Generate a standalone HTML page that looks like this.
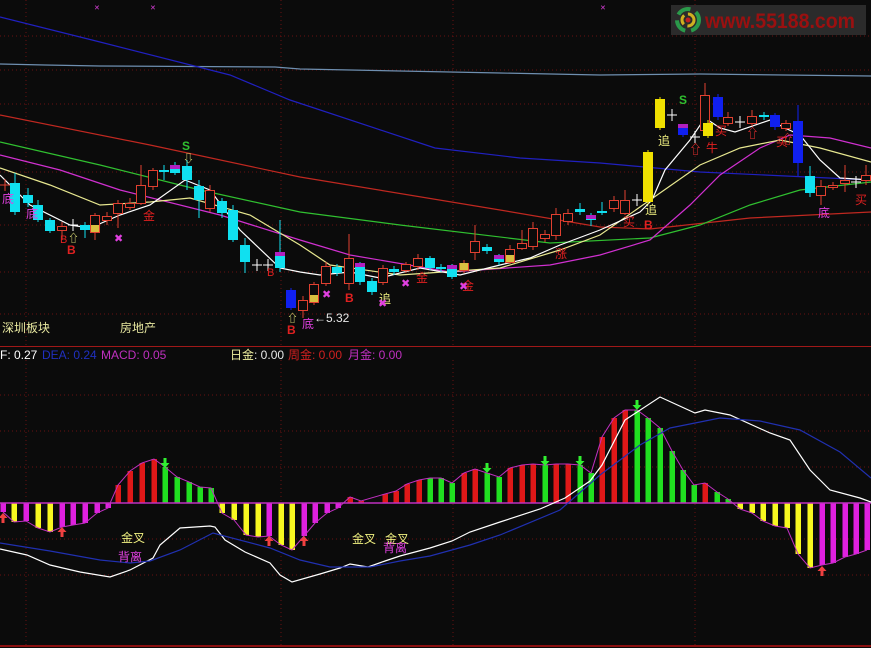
<!DOCTYPE html>
<html><head><meta charset="utf-8"><style>
html,body{margin:0;padding:0;background:#0b0b0b;width:871px;height:648px;overflow:hidden}
svg{display:block}
text{font-family:"Liberation Sans","Noto Sans CJK SC",sans-serif}
</style></head><body>
<svg id="s" width="871" height="648" viewBox="0 0 871 648" xmlns="http://www.w3.org/2000/svg">
<rect width="871" height="648" fill="#0b0b0b"/>
<g stroke="#6a1010" stroke-dasharray="1,3" stroke-width="1">
<line x1="0" y1="36" x2="871" y2="36"/><line x1="0" y1="70" x2="871" y2="70"/><line x1="0" y1="104" x2="871" y2="104"/>
<line x1="0" y1="172" x2="871" y2="172"/><line x1="0" y1="225" x2="871" y2="225"/><line x1="0" y1="272" x2="871" y2="272"/><line x1="0" y1="314" x2="871" y2="314"/>
<line x1="0" y1="395" x2="871" y2="395"/><line x1="0" y1="431" x2="871" y2="431"/><line x1="0" y1="467" x2="871" y2="467"/><line x1="0" y1="539" x2="871" y2="539"/><line x1="0" y1="575" x2="871" y2="575"/>
<line x1="26" y1="0" x2="26" y2="346"/><line x1="281" y1="0" x2="281" y2="346"/><line x1="453" y1="0" x2="453" y2="346"/><line x1="695" y1="0" x2="695" y2="346"/>
<line x1="26" y1="360" x2="26" y2="645"/><line x1="281" y1="360" x2="281" y2="645"/><line x1="453" y1="360" x2="453" y2="645"/><line x1="695" y1="360" x2="695" y2="645"/>
</g>
<line x1="0" y1="346.5" x2="871" y2="346.5" stroke="#a01818"/>
<line x1="0" y1="646" x2="871" y2="646" stroke="#8a1010" stroke-width="2"/>
<!-- logo -->
<rect x="671" y="5" width="195" height="30" fill="#2b2b2b"/>
<circle cx="688" cy="20" r="11" fill="none" stroke="#2a9a4a" stroke-width="4" stroke-dasharray="14 6"/>
<circle cx="688" cy="20" r="6" fill="none" stroke="#d0b020" stroke-width="3" stroke-dasharray="10 4"/>
<circle cx="688" cy="20" r="2.5" fill="#c02020"/>
<text x="705" y="28" font-size="21" font-weight="bold" fill="#9a1010" textLength="150" lengthAdjust="spacingAndGlyphs">www.55188.com</text>
<!-- MAs -->
<g fill="none" stroke-width="1.2">
<polyline stroke="#6f8fb0" points="0,64 45,65 100,66 275,67 300,69 400,71 500,73 600,75 700,74 871,76"/>
<polyline stroke="#2020c0" points="0,17 100,42 230,75 290,100 435,148 520,158 600,163 700,172 871,180"/>
<polyline stroke="#c02820" points="0,115 150,145 300,177 500,210 600,227 650,229 750,218 871,212"/>
<polyline stroke="#30c030" points="0,142 100,165 200,190 300,212 400,225 550,243 650,238 700,225 750,205 800,190 871,182"/>
<polyline stroke="#d030d0" points="0,155 60,170 120,190 220,215 300,240 350,255 450,272 550,265 600,255 650,240 690,205 720,175 760,148 790,135 830,138 871,148"/>
<polyline stroke="#e8e890" points="0,168 50,185 100,205 150,202 190,198 250,215 300,245 330,265 400,275 500,268 560,250 600,235 650,200 700,165 740,148 780,140 820,148 871,162"/>
<polyline stroke="#ffffff" points="0,175 30,205 70,225 90,228 120,215 150,205 185,180 210,190 240,230 280,268 300,272 320,275 350,272 380,278 420,268 460,275 500,265 530,258 560,245 600,230 640,212 652,200 665,170 690,140 705,118 720,128 735,132 770,120 785,128 800,135 820,160 840,178 871,180"/>
</g>
<g id="candles"></g>
<g id="macd"></g>
<!-- labels top -->
<g font-size="12">
<text x="2" y="203" fill="#e040e0">底</text><text x="26" y="218" fill="#e040e0">底</text>
<text x="302" y="328" fill="#e040e0">底</text><text x="818" y="217" fill="#e040e0">底</text>
<text x="143" y="220" fill="#e02020">金</text><text x="416" y="282" fill="#e02020">金</text><text x="462" y="290" fill="#e02020">金</text>
<text x="555" y="258" fill="#e02020">涨</text>
<text x="379" y="303" fill="#f0f080">追</text><text x="658" y="145" fill="#f0f080">追</text><text x="645" y="214" fill="#f0f080">追</text>
<text x="623" y="226" fill="#e02020">买</text><text x="715" y="135" fill="#e02020">买</text><text x="776" y="146" fill="#e02020">买</text><text x="855" y="204" fill="#e02020">买</text>
<text x="706" y="152" fill="#e02020">牛</text>
<text x="2" y="332" fill="#e8e8a0">深圳板块</text><text x="120" y="332" fill="#e8e8a0">房地产</text>
<text x="314" y="322" fill="#e8e8e8">←5.32</text>
</g>
<g font-size="12" font-weight="bold" font-family="Liberation Serif,serif">
<text x="67" y="254" fill="#e02020">B</text><text x="60" y="243" fill="#e02020" font-weight="normal" font-size="11">B</text><text x="267" y="276" fill="#e02020" font-weight="normal" font-size="11">B</text>
<text x="287" y="334" fill="#e02020">B</text><text x="345" y="302" fill="#e02020">B</text><text x="644" y="229" fill="#e02020">B</text>
<text x="182" y="150" fill="#30c030">S</text><text x="679" y="104" fill="#30c030">S</text>
</g>
<g font-size="11" fill="#e040e0">
<text x="114" y="242">✖</text><text x="322" y="298">✖</text><text x="378" y="307">✖</text><text x="401" y="287">✖</text><text x="459" y="290">✖</text>
<text x="94" y="10" font-size="7">✕</text><text x="150" y="10" font-size="7">✕</text><text x="600" y="10" font-size="7">✕</text>
</g>
<g font-size="11" fill="#f0f080">
<text x="68" y="242">⇧</text><text x="287" y="322">⇧</text><text x="183" y="162">⇩</text>
</g>
<g font-size="13" fill="#f03030"><text x="689" y="154">⇧</text><text x="746" y="138">⇧</text><text x="781" y="144">⇧</text></g>
<!-- macd text -->
<g font-size="12">
<text x="0" y="359" fill="#ffffff">F: 0.27</text>
<text x="42" y="359" fill="#2030c0">DEA: 0.24</text>
<text x="101" y="359" fill="#c030c0">MACD: 0.05</text>
<text x="230" y="359" fill="#f0f0a0">日金<tspan fill="#e8e8e8">: 0.00</tspan></text>
<text x="288" y="359" fill="#d02020">周金: 0.00</text>
<text x="348" y="359" fill="#c030c0">月金: 0.00</text>
<text x="121" y="542" fill="#f0f080">金叉</text><text x="118" y="561" fill="#e040e0">背离</text>
<text x="352" y="543" fill="#f0f080">金叉</text><text x="385" y="543" fill="#f0f080">金叉</text><text x="383" y="552" fill="#e040e0">背离</text>
</g>
</svg>
<script>
var NS="http://www.w3.org/2000/svg";
function el(p,t,a){var e=document.createElementNS(NS,t);for(var k in a)e.setAttribute(k,a[k]);p.appendChild(e);return e}
var C={c:"#10e0f0",r:"#e04030",b:"#1020f0",y:"#f0e000",x:"#10e0f0",w:"#ffffff"};
var cs=[[5,'rx',185],[15,'c',183,212,173,215],[28,'c',195,203,188,207],[38,'c',205,220,200,222],[50,'c',220,231,218,233],[62,'r',226,230,222,240],[73,'wx',225],[85,'c',225,230,222,238],[95,'r',215,232,213,240,'y'],[107,'r',216,220,212,225],[118,'r',203,213,200,228],[130,'r',203,207,198,210],[141,'r',185,203,165,205],[153,'r',170,186,168,190],[164,'c',170,172,165,180],[175,'c',168,173,162,175,'m'],[187,'c',166,180,160,190],[199,'c',186,200,180,218],[210,'r',190,208,185,212],[222,'c',201,213,198,218],[233,'c',210,240,205,242],[245,'c',245,262,238,273],[257,'wx',265],[268,'wx',265],[280,'c',255,268,220,272,'m'],[291,'b',290,308,288,310],[303,'r',300,310,296,318],[314,'r',284,302,282,305,'y'],[326,'r',266,283,262,286],[337,'c',267,273,264,276],[349,'r',258,283,234,290],[360,'c',266,282,262,285,'m'],[372,'c',281,292,278,295],[383,'r',268,282,265,285],[394,'c',269,272,266,275],[406,'r',264,270,262,273],[418,'r',258,266,254,270],[430,'c',258,268,256,270],[441,'c',267,269,264,272],[452,'c',268,277,264,279,'m'],[464,'r',263,270,260,273,'y'],[475,'r',241,252,225,260],[487,'c',247,251,244,254],[499,'c',258,262,254,265,'m'],[510,'r',249,262,245,264,'y'],[522,'r',243,248,230,250],[533,'r',228,246,222,250],[545,'r',234,238,230,242],[556,'r',214,235,208,240],[568,'r',213,221,209,225],[580,'c',209,212,203,215],[591,'c',218,220,213,226,'m'],[602,'c',211,213,202,215],[614,'r',200,208,196,212],[625,'r',200,213,190,215],[637,'wx',200],[648,'y',152,202,150,204],[660,'y',99,128,97,130],[672,'wx',115],[683,'b',127,135,125,137,'m'],[695,'wx',137],[705,'r',95,130,83,135],[708,'y',123,136,120,138],[718,'b',97,117,94,120],[728,'r',117,123,112,126],[740,'wx',122],[752,'r',116,123,110,126],[764,'c',115,117,112,120],[775,'b',115,127,113,130],[786,'r',123,128,120,131],[798,'b',121,163,105,176],[810,'c',176,193,166,197],[821,'r',186,195,180,205],[833,'r',185,187,182,190],[845,'r',180,183,165,192],[856,'wx',182],[866,'r',175,180,165,185]];
var g=document.getElementById('candles');
cs.forEach(function(c){var x=c[0],t=c[1];
 if(t=='wx'||t=='rx'){var col=t=='wx'?'#fff':'#e04030';el(g,'line',{x1:x-5,y1:c[2],x2:x+5,y2:c[2],stroke:col});el(g,'line',{x1:x,y1:c[2]-6,x2:x,y2:c[2]+6,stroke:col});return}
 var col=C[t];el(g,'line',{x1:x,y1:c[4],x2:x,y2:c[5],stroke:col});
 if(t=='r'){el(g,'rect',{x:x-4.5,y:c[2]+.5,width:9,height:Math.max(1,c[3]-c[2]),fill:'#0b0b0b',stroke:col})}
 else el(g,'rect',{x:x-5,y:c[2],width:10,height:Math.max(2,c[3]-c[2]),fill:col});
 if(c[6]=='m')el(g,'rect',{x:x-5,y:c[2]-3,width:10,height:4,fill:'#b020c0'});
 if(c[6]=='y')el(g,'rect',{x:x-4,y:c[3]-7,width:8,height:7,fill:'#d8c040'});
});
var Z=503;
var bars=[[3,'m',512],[14,'y',522],[26,'m',521],[38,'y',528],[50,'y',532],[62,'m',527],[73,'m',525],[85,'m',523],[97,'m',513],[108,'m',508],[118,'r',485],[130,'r',471],[142,'r',463],[154,'r',459],[165,'g',467],[177,'g',477],[189,'g',482],[200,'g',487],[211,'g',488],[222,'y',513],[234,'y',520],[246,'y',535],[258,'y',537],[269,'m',536],[281,'y',545],[292,'y',550],[304,'m',536],[315,'m',523],[327,'m',513],[338,'m',508],[350,'r',497],[361,'r',501],[385,'r',494],[396,'r',491],[407,'r',484],[419,'r',480],[430,'g',478],[441,'g',478],[452,'g',483],[464,'r',473],[475,'r',469],[487,'g',473],[499,'g',477],[510,'r',468],[522,'r',465],[533,'r',464],[545,'g',465],[556,'r',464],[568,'r',464],[580,'g',465],[591,'g',473],[602,'r',437],[614,'r',418],[625,'r',410],[637,'g',410],[648,'g',418],[660,'g',428],[672,'g',451],[683,'g',470],[694,'g',485],[705,'r',483],[717,'g',492],[728,'g',499],[740,'y',509],[752,'y',513],[763,'y',521],[775,'y',526],[787,'y',528],[798,'y',554],[810,'y',568],[822,'m',565],[833,'m',563],[845,'m',557],[856,'m',554],[867,'m',550]];
var BC={m:'#e020e0',y:'#f8f820',r:'#e01818',g:'#20e020'};
var m=document.getElementById('macd');var pts=[];
bars.forEach(function(b){var y1=Math.min(Z,b[2]),h=Math.abs(Z-b[2]);el(m,'rect',{x:b[0]-2.5,y:y1,width:5.5,height:Math.max(1,h),fill:BC[b[1]]});pts.push(b[0]+','+b[2])});
el(m,'polyline',{points:pts.join(' '),fill:'none',stroke:'#c030c0','stroke-width':1});
el(m,'line',{x1:0,y1:Z,x2:871,y2:Z,stroke:'#c030c0','stroke-width':1.5});
el(m,'polyline',{points:"0,549 27,555 50,565 80,572 110,577 130,570 153,558 160,545 180,528 210,526 215,527 225,540 245,552 270,563 280,575 292,582 320,574 340,568 350,564 368,567 385,561 400,556 430,548 452,541 470,532 500,522 540,509 565,498 590,481 602,465 625,420 660,397 695,413 705,410 730,415 770,433 790,440 810,470 830,490 860,498 871,502",fill:'none',stroke:'#fff','stroke-width':1.2});
el(m,'polyline',{points:"0,543 50,551 100,560 130,563 150,561 180,550 213,533 270,548 300,560 330,567 370,567 400,561 430,556 470,545 500,535 560,510 600,475 640,445 670,428 720,418 760,421 800,430 840,452 871,478",fill:'none',stroke:'#2030b0','stroke-width':1.2});
[[165,464],[487,469],[545,462],[580,462],[637,406]].forEach(function(p){el(m,'path',{d:'M'+(p[0]-1.5)+','+(p[1]-6)+'h3v5h3l-4.5,5l-4.5,-5h3z',fill:'#30f030'})});
[[3,517],[62,531],[269,540],[304,540],[822,570]].forEach(function(p){el(m,'path',{d:'M'+(p[0]-1.5)+','+(p[1]+6)+'h3v-5h3l-4.5,-5l-4.5,5h3z',fill:'#f04040'})});
</script>
</body></html>
